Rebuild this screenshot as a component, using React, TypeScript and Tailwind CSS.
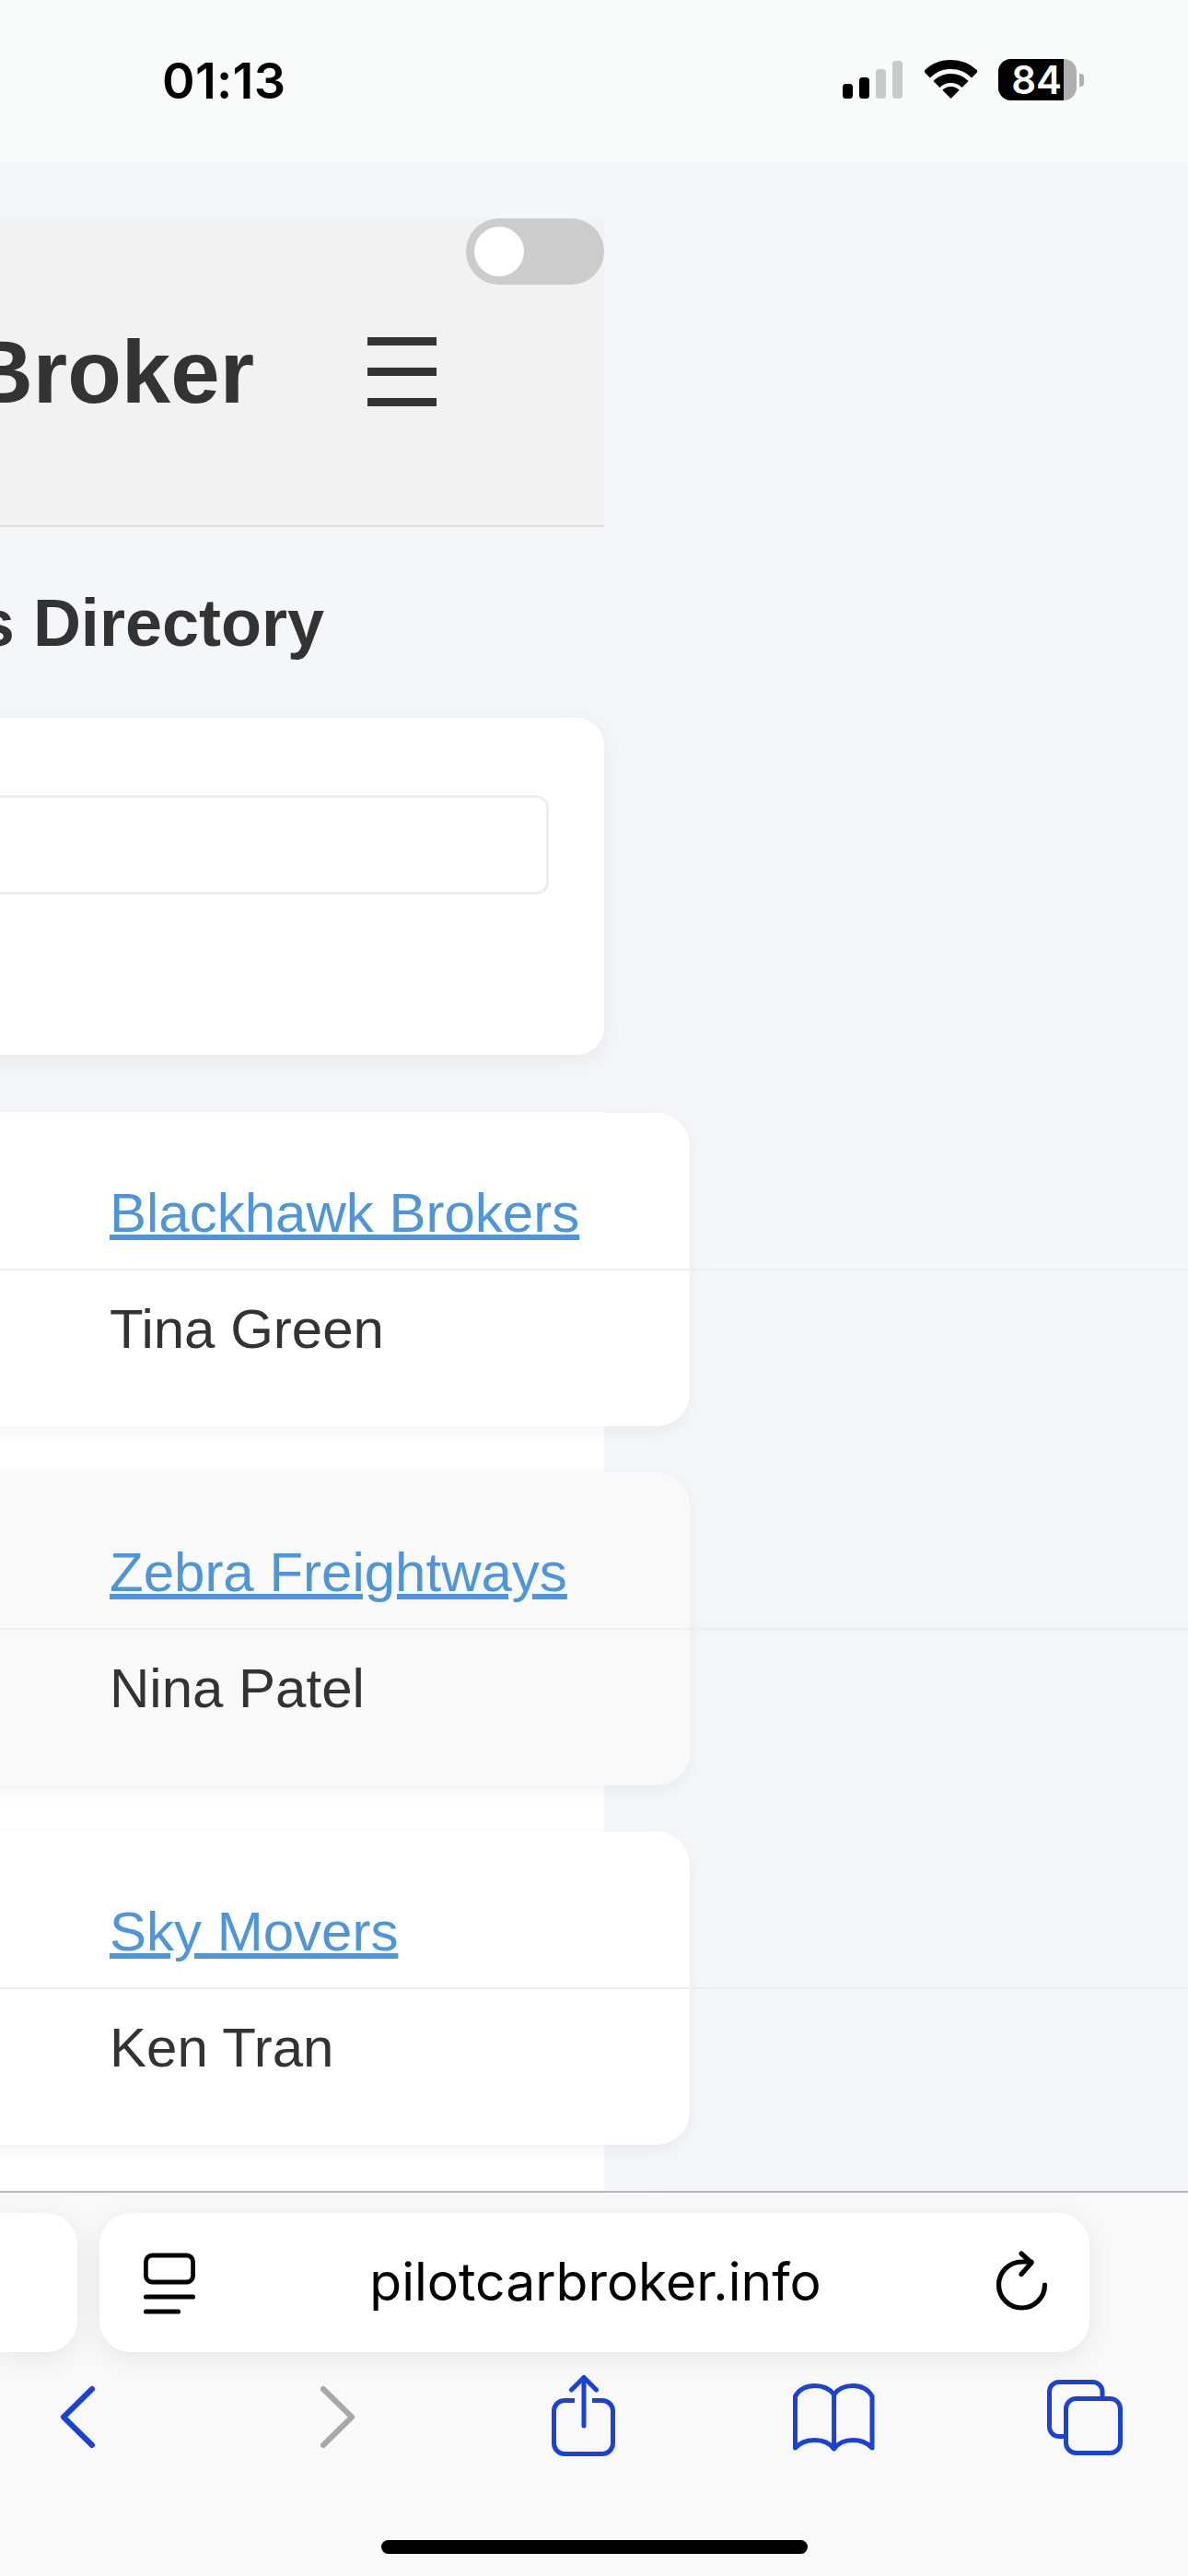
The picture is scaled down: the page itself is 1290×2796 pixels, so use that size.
import React from "react";

const sans = "font-['Liberation_Sans',Arial,sans-serif]";

function Row({ name, contact, alt }: { name: string; contact: string; alt?: boolean }) {
  return (
    <div className={`-ml-[100px] w-[849px] mb-[50px] rounded-[36px] shadow-[0_6px_18px_rgba(0,0,0,0.05)] ${alt ? "bg-[#f9f9f9]" : "bg-white"}`}>
      <div className="pl-[219px] pt-[73px] pb-[24px] text-[60px] leading-[72px] text-[#4f95da]">
        <a href="#" className="underline">{name}</a>
      </div>
      <div className="w-[1390px] h-[2px] bg-[#eeeeee]" />
      <div className="pl-[219px] pt-[28px] pb-[69px] text-[60px] leading-[72px] text-[#333333]">{contact}</div>
    </div>
  );
}

function Signal() {
  return (
    <svg width="66" height="42" viewBox="0 0 66 42" className="block">
      <rect x="0" y="25" width="11" height="16" rx="3.5" fill="#000" />
      <rect x="18" y="18" width="11" height="23" rx="3.5" fill="#000" />
      <rect x="36" y="9" width="11" height="32" rx="3.5" fill="#c9cbca" />
      <rect x="54" y="0" width="11" height="41" rx="3.5" fill="#c9cbca" />
    </svg>
  );
}

function Wifi() {
  return (
    <svg width="57" height="42" viewBox="0 0 57 42" className="block">
      <path d="M2.34 15.84A37 37 0 0 1 54.66 15.84" fill="none" stroke="#000" strokeWidth="10" />
      <path d="M12.94 26.44A22 22 0 0 1 44.06 26.44" fill="none" stroke="#000" strokeWidth="10" />
      <path d="M28.5 42L19.3 32.8A13 13 0 0 1 37.7 32.8Z" fill="#000" />
    </svg>
  );
}

function Battery() {
  return (
    <div className="flex items-center">
      <div className="relative w-[85px] h-[45px] rounded-[14px] overflow-hidden bg-[#aeb0af] flex">
        <div className="w-[71px] h-full bg-black flex items-center justify-end pr-[2px] text-white font-['Inter',sans-serif] font-semibold text-[42px] leading-none">
          84
        </div>
      </div>
      <div className="ml-[3px] w-[5px] h-[14px] rounded-r-[4px] bg-[#aeb0af]" />
    </div>
  );
}

function TabIcon() {
  return (
    <svg width="60" height="70" viewBox="0 0 60 70" fill="none" stroke="#000" strokeWidth="4.8" className="block">
      <rect x="4.4" y="5" width="51.2" height="29" rx="7" />
      <path d="M4.5 50H55.5" strokeLinecap="round" strokeWidth="5.2" />
      <path d="M4.5 66H39.5" strokeLinecap="round" strokeWidth="5.2" />
    </svg>
  );
}

function Reload() {
  return (
    <svg width="60" height="72" viewBox="0 0 60 72" fill="none" stroke="#000" strokeWidth="5.2" strokeLinecap="round" strokeLinejoin="round" className="block">
      <path d="M55.5 38A25 25 0 1 1 30.5 13H41" />
      <path d="M30 4L41 14L30 26.5" />
    </svg>
  );
}

const blue = "#1a43d6";

export default function App() {
  return (
    <div className={`w-[1290px] h-[2796px] flex flex-col overflow-hidden bg-[#f4f6fa] text-[#333333] ${sans}`}>
      <div className="h-[176px] shrink-0 bg-[#f9fbfa] flex items-start pl-[176px]">
        <div className="mt-[58px] font-['Inter',sans-serif] font-semibold text-[54px] leading-[60px] text-black tracking-[0.3px]">01:13</div>
        <div className="ml-auto mr-[113px] mt-[64px] flex items-start">
          <div className="mt-[2px]"><Signal /></div>
          <div className="ml-[23px] mt-[1px]"><Wifi /></div>
          <div className="ml-[23px]"><Battery /></div>
        </div>
      </div>

      <main className="flex-1 min-h-0 overflow-hidden pt-[61px]">
        <header className="relative w-[656px] h-[335px] bg-[#f2f2f2] border-b-2 border-[#dddddd] flex items-center justify-end pr-[380px]">
          <button className="absolute right-0 top-0 w-[150px] h-[72px] rounded-[36px] bg-[#cccccc]">
            <span className="absolute left-[9px] top-[9px] w-[54px] h-[54px] rounded-full bg-white" />
          </button>
          <div className="shrink-0 text-[96px] leading-[110px] font-bold text-[#333333] whitespace-nowrap">Broker</div>
          <div className="absolute left-[399px] top-[129px] w-[75px] flex flex-col gap-[24px]">
            <span className="block h-[9px] bg-[#333333]" />
            <span className="block h-[9px] bg-[#333333]" />
            <span className="block h-[9px] bg-[#333333]" />
          </div>
        </header>

        <div className="w-[352px] h-[207px] flex items-center justify-end">
          <h2 className="shrink-0 text-[72px] leading-[84px] font-bold text-[#333333] whitespace-nowrap">s Directory</h2>
        </div>

        <section className="-ml-[100px] w-[756px] h-[366px] bg-white rounded-[30px] shadow-[0_6px_24px_rgba(0,0,0,0.06)] pt-[84px] pr-[60px]">
          <div className="h-[108px] border-[3px] border-[#eeeeee] rounded-[14px] bg-white" />
        </section>

        <div className="mt-[62px] w-[656px] bg-white pt-[1px]">
          <Row name="Blackhawk Brokers" contact="Tina Green" />
          <Row name="Zebra Freightways" contact="Nina Patel" alt />
          <Row name="Sky Movers" contact="Ken Tran" />
          <Row name="" contact="" alt />
        </div>
      </main>

      <footer className="relative h-[418px] shrink-0 bg-[#f9f9f9] border-t-2 border-[#b7b7b7]">
        <div className="flex gap-[24px] pt-[22px] h-[173px]">
          <div className="w-[84px] h-[151px] bg-white rounded-r-[34px] shadow-[0_6px_30px_rgba(0,0,0,0.08)]" />
          <div className="relative w-[1075px] h-[151px] bg-white rounded-[34px] shadow-[0_6px_30px_rgba(0,0,0,0.08)] flex items-center pl-[46px] pr-[44px]">
            <TabIcon />
            <div className="flex-1 text-center font-['Inter',sans-serif] text-[57px] leading-[70px] text-black pb-[2px]">pilotcarbroker.info</div>
            <Reload />
          </div>
        </div>

        <div className="flex mt-[25px] h-[90px] items-start pl-[60px]">
          <svg width="50" height="90" viewBox="0 0 50 90" fill="none" stroke={blue} strokeWidth="6" strokeLinecap="round" strokeLinejoin="round" className="block">
            <path d="M40 15L9 45.5L40 76" />
          </svg>
          <svg width="50" height="90" viewBox="0 0 50 90" fill="none" stroke="#a8a8a8" strokeWidth="6" strokeLinecap="round" strokeLinejoin="round" className="block ml-[230px]">
            <path d="M11 15L42 45.5L11 76" />
          </svg>
          <svg width="80" height="90" viewBox="0 0 80 90" fill="none" stroke={blue} strokeWidth="5" strokeLinecap="round" strokeLinejoin="round" className="block ml-[205px]">
            <path d="M29 27.5H18a11.5 11.5 0 0 0-11.5 11.5V74a11.5 11.5 0 0 0 11.5 11.5H59a11.5 11.5 0 0 0 11.5-11.5V39a11.5 11.5 0 0 0-11.5-11.5H48" strokeLinecap="butt" />
            <path d="M39 55V3" />
            <path d="M25.5 16L39 2.5L52.5 16" />
          </svg>
          <svg width="105" height="90" viewBox="0 0 105 90" fill="none" stroke={blue} strokeWidth="5" strokeLinecap="round" strokeLinejoin="round" className="block ml-[180px]">
            <path d="M50.6 21C46 15 38 11.5 30 11.5C21 11.5 13 15 8.5 23V79C13 74 21 70.5 30 70.5C38 70.5 46 74 50.6 80V21C55 15 63 11.5 71 11.5C80 11.5 87.5 15 92 23V79C87.5 74 80 70.5 71 70.5C63 70.5 55 74 50.6 80" />
          </svg>
          <svg width="95" height="90" viewBox="0 0 95 90" fill="none" stroke={blue} strokeWidth="5" className="block ml-[170px]">
            <path d="M25 66.5H20a10.5 10.5 0 0 1-10.5-10.5V18a10.5 10.5 0 0 1 10.5-10.5H56.5a10.5 10.5 0 0 1 10.5 10.5V25.5" />
            <rect x="27.5" y="25.5" width="59" height="59" rx="11" />
          </svg>
        </div>

        <div className="absolute left-[414px] top-[377px] w-[463px] h-[15px] rounded-full bg-black" />
      </footer>
    </div>
  );
}
